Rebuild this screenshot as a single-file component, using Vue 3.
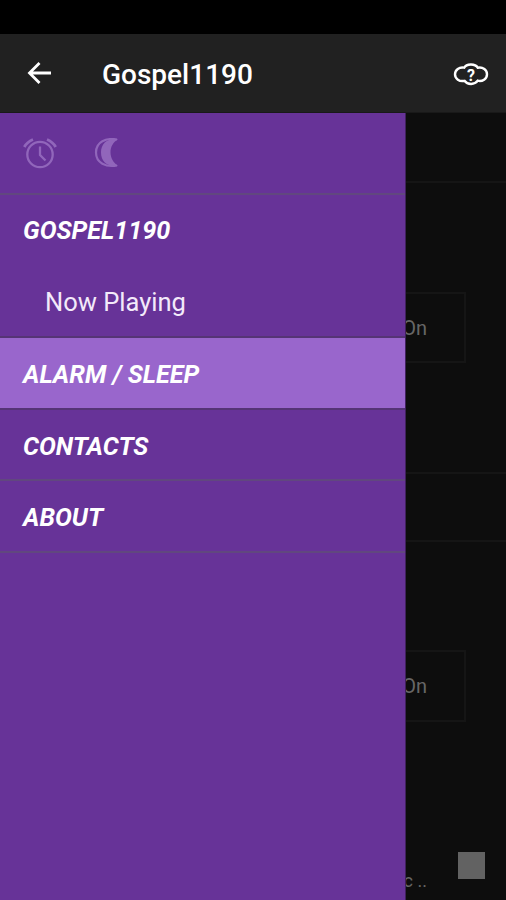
<script setup>
const entries = [
  { label: 'ALARM / SLEEP', active: true },
  { label: 'CONTACTS', active: false },
  { label: 'ABOUT', active: false },
]
</script>

<template>
  <div class="screen">
    <div class="status"></div>
    <header class="bar">
      <svg class="back" width="26" height="26" viewBox="0 0 26 26" fill="none" stroke="#fff" stroke-width="2.8">
        <path d="M25 13H4M13.500 3L3.500 13L13.500 23" />
      </svg>
      <h1>Gospel1190</h1>
      <svg class="cloud" width="36" height="26" viewBox="0 0 36 26">
        <path d="M11.2 5.700C13.300 1.600 22.300 1.400 24.700 5.700C30 4.700 34 8 34 12.200C34 16.800 29.300 20 24.700 18.700C21.800 23 14.400 23 11.500 18.800C6.400 20 2 16.800 2 12.300C2 8 6.300 4.600 11.200 5.700Z" fill="none" stroke="#fff" stroke-width="2.400" />
        <text x="18" y="18.500" text-anchor="middle">?</text>
      </svg>
    </header>
    <main>
      <div class="page">
        <div class="heading"></div>
        <section><div class="toggle"><span>On</span></div></section>
        <div class="heading second"></div>
        <section class="last"><div class="toggle"><span>On</span></div></section>
        <footer><span>c ..</span><i class="stop"></i></footer>
      </div>
      <nav class="drawer">
        <div class="tools">
          <svg width="34" height="32" viewBox="0 0 34 32" fill="none" stroke="#9166bb" stroke-width="2.3">
            <circle cx="17" cy="16.500" r="12.700" />
            <path d="M17 8.500V17L22.500 22.500" />
            <path d="M1.300 9Q4 4 10 1.500M32.700 9Q30 4 24 1.500" stroke-width="2.800" />
          </svg>
          <svg class="moon" width="26" height="30" viewBox="0 0 26 30">
            <path d="M23 1.500C12 -.5 2 4 2 14.500S12 29.500 23 27.500" fill="none" stroke="#9166bb" stroke-width="2.200" />
            <path d="M24 1.200C14 7 14 21 24 27.800C14 29.300 7 24 7 14.500C7 5 14 -.3 24 1.200Z" fill="#9166bb" />
          </svg>
        </div>
        <div class="group">
          <a class="entry">GOSPEL1190</a>
          <a class="sub">Now Playing</a>
        </div>
        <a v-for="e in entries" :key="e.label" class="entry item" :class="{ active: e.active }">{{ e.label }}</a>
      </nav>
    </main>
  </div>
</template>

<style>
body { background: #000; }
</style>

<style scoped>
* { box-sizing: border-box; }
.screen { height: 900px; display: flex; flex-direction: column; font-family: Roboto, sans-serif; overflow: hidden; }
.status { height: 34px; background: #000; }
.bar { height: 79px; background: #212121; display: flex; align-items: center; padding: 0 17px 0 26px; border-bottom: 1px solid #191919; }
h1 { margin: 3px 0 0 50px; font-size: 28px; font-weight: 500; color: #fff; line-height: 32px; flex: 1; }
.cloud { margin-top: 3px; }
.cloud text { font: 700 16px Roboto, sans-serif; fill: #fff; }
main { position: relative; height: 787px; flex: none; }
.page { height: 787px; background: #0d0d0d; display: flex; flex-direction: column; }
.heading { flex: none; height: 70px; border-bottom: 2px solid #151515; }
.second { border-top: 2px solid #151515; }
section { flex: none; height: 289px; padding: 109px 40px 0 0; display: flex; justify-content: flex-end; }
section.last { padding-top: 108px; }
.toggle { width: 250px; height: 71px; border: 2px solid #151515; display: flex; align-items: center; justify-content: flex-end; padding-right: 37px; color: #666; font-size: 20px; }
.last .toggle { height: 72px; }
footer { flex: none; height: 69px; display: flex; align-items: flex-start; justify-content: flex-end; padding-right: 21px; color: #666; font-size: 18px; }
footer span { margin: 39px 31px 0 0; line-height: 22px; }
.stop { width: 27px; height: 27px; background: #626262; margin-top: 21px; }
.drawer { position: absolute; left: 0; top: 0; width: 406px; height: 787px; background: #673398; border-right: 1px solid #40215c; }
.tools { height: 82px; padding: 25px 0 0 23px; display: flex; border-bottom: 2px solid #61477f; }
.moon { margin-left: 37px; }
.group { height: 143px; border-bottom: 2px solid #553475; }
.entry, .sub { display: flex; align-items: center; height: 72px; color: #fff; }
.entry { padding-left: 23px; font-size: 25.2px; font-weight: 700; font-style: italic; }
.group .entry { height: 71px; }
.sub { padding-left: 45px; font-size: 25.5px; color: #f3eafa; }
.item { height: 71.5px; padding-top: 4px; border-bottom: 2px solid #61477f; }
.active { background: #9966cc; border-bottom-color: #553475; }
</style>
